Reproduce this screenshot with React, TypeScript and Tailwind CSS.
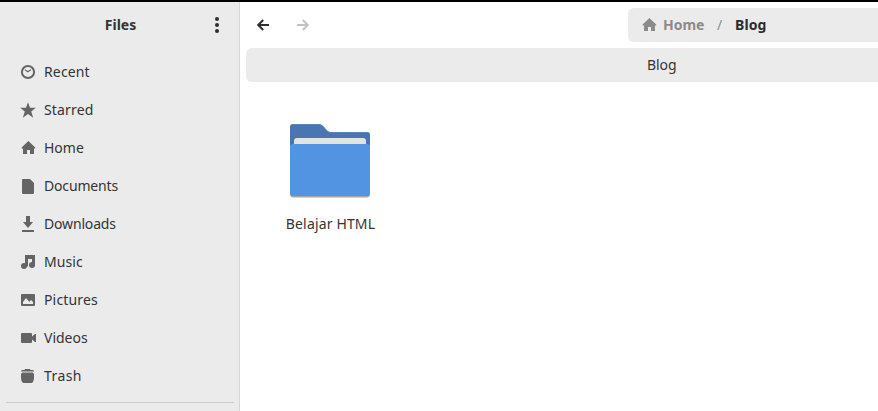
import type { ReactNode } from "react";

const HomeShape = () => <path d="M8.4 1 1.6 7.4V8.4H3V14h4v-3.9h3V14h4V8.4h1.2v-1z" />;

type Place = { label: string; spacing: string; icon: ReactNode };

const places: Place[] = [
  {
    label: "Recent",
    spacing: "tracking-[0.15px]",
    icon: (
      <>
        <circle cx="8" cy="8" r="6.1" fill="none" stroke="currentColor" strokeWidth="2" />
        <path d="M5 5.8 7.8 7.8 11 5.8" fill="none" stroke="currentColor" strokeWidth="1.1" />
      </>
    ),
  },
  {
    label: "Starred",
    spacing: "tracking-[0.15px]",
    icon: <path d="m8 .3 2 5.5h5.8l-4.6 3.6 2 6.4L8 12l-5.2 3.8 2-6.4L.2 5.8H6z" />,
  },
  { label: "Home", spacing: "tracking-[0px]", icon: <HomeShape /> },
  {
    label: "Documents",
    spacing: "tracking-[-0.17px]",
    icon: <path d="M3 1h7l4 4v10a1 1 0 0 1-1 1H3a1 1 0 0 1-1-1V2a1 1 0 0 1 1-1z" />,
  },
  {
    label: "Downloads",
    spacing: "tracking-[-0.17px]",
    icon: <path d="M6 0h4v6h3L8 12 3 6h3zM2 14h12v2H2z" />,
  },
  {
    label: "Music",
    spacing: "tracking-[0.1px]",
    icon: (
      <>
        <path d="M5 1h10v10.5h-3V5H8v7.5H5z" />
        <circle cx="4" cy="12" r="3" />
        <circle cx="12" cy="11" r="3" />
      </>
    ),
  },
  {
    label: "Pictures",
    spacing: "tracking-[0.15px]",
    icon: (
      <path
        fillRule="evenodd"
        d="M2 2h12a1 1 0 0 1 1 1v10a1 1 0 0 1-1 1H2a1 1 0 0 1-1-1V3a1 1 0 0 1 1-1zM3 12h10V10L11.2 8 9.2 9.7 6 6 3 10z"
      />
    ),
  },
  {
    label: "Videos",
    spacing: "tracking-[0px]",
    icon: <path d="M2 3h9a1 1 0 0 1 1 1v2.5L15 4h1v8h-1l-3-2.5V12a1 1 0 0 1-1 1H2a1 1 0 0 1-1-1V4a1 1 0 0 1 1-1z" />,
  },
  {
    label: "Trash",
    spacing: "tracking-[0.4px]",
    icon: <path d="M5 1h5l.5 1H13l1 1v.5H1V3l1-1h2.5zM2.5 4.5h10Q14 5 14 6.5V10q-.3 5-3 5H4q-2.700 0-3-5V6.500Q1 5 2.500 4.500z" />,
  },
];

function Sidebar() {
  return (
    <aside className="flex w-60 shrink-0 flex-col border-r border-[#d6d6d6] bg-[#ebebeb]">
      <header className="grid h-[46px] grid-cols-[1fr_auto_1fr] items-center pr-[14px] pl-4">
        <h1 className="col-start-2 text-[14px] font-bold">Files</h1>
        <button aria-label="Menu" className="justify-self-end">
          <svg className="size-4" viewBox="0 0 16 16" fill="#2f2f2f">
            <circle cx="8" cy="2" r="2" />
            <circle cx="8" cy="8" r="2" />
            <circle cx="8" cy="14" r="2" />
          </svg>
        </button>
      </header>
      <nav className="mt-[5px]">
        {places.map((p) => (
          <a key={p.label} className="flex h-[38px] items-center gap-2 pl-5">
            <svg className="size-4 text-[#646464]" viewBox="0 0 16 16" fill="currentColor">
              {p.icon}
            </svg>
            <span className={p.spacing}>{p.label}</span>
          </a>
        ))}
      </nav>
      <hr className="mt-[7px] mr-[5px] ml-[6px] border-[#cdcdcd]" />
    </aside>
  );
}

function Folder() {
  return (
    <svg className="h-20 w-20" viewBox="0 0 80 80">
      <path d="M0 10h80v61a3.5 3.5 0 0 1-3.5 3.5h-73A3.5 3.5 0 0 1 0 71z" fill="#a5a5a5" />
      <path d="M3 1h25c3 0 4 1 6 3l2 2.500c2 2 3 2.500 5 2.500h36a3 3 0 0 1 3 3v30H0V4a3 3 0 0 1 3-3z" fill="#4975b2" />
      <path d="M3 1.500h25c3 0 4 1 6 3l2 2.500c2 2 3 2.500 5 2.500h36" fill="none" stroke="#5b83ba" />
      <path d="M7 15h66a3 3 0 0 1 3 3v10H4V18a3 3 0 0 1 3-3z" fill="#e3e3e3" />
      <path d="M3 21h74a3 3 0 0 1 3 3v46a3 3 0 0 1-3 3H3a3 3 0 0 1-3-3V24a3 3 0 0 1 3-3z" fill="#5294e2" />
    </svg>
  );
}

export default function App() {
  return (
    <div className="flex h-[411px] w-[878px] overflow-hidden border-t-2 border-black bg-white font-['Noto_Sans','Open_Sans',sans-serif] text-[14px] leading-5 text-[#343434]">
      <Sidebar />
      <main className="min-w-0 flex-1 pt-[6px] pl-[6px]">
        <div className="flex h-[34px] items-center justify-between">
          <div className="flex gap-6 pl-[9px]">
            <svg className="size-4 text-[#2f2f2f]" viewBox="0 0 16 16" fill="none" stroke="currentColor" strokeWidth="2">
              <path d="M14 8H3.500M8.200 3 3.200 8l5 5" />
            </svg>
            <svg className="size-4 text-[#c2c2c2]" viewBox="0 0 16 16" fill="none" stroke="currentColor" strokeWidth="2">
              <path d="M2 8h10.500M7.800 3l5 5-5 5" />
            </svg>
          </div>
          <div className="flex h-full w-[250px] items-center rounded-l-md bg-[#ebebeb] pl-[13px] font-bold text-[#8b8b8b]">
            <svg className="size-4" viewBox="0 0 16 16" fill="currentColor">
              <HomeShape />
            </svg>
            <span className="ml-[6px] w-[42px]">Home</span>
            <span className="ml-3 w-[18px] font-normal">/</span>
            <span className="tracking-[0.1px] text-[#2c2c2c]">Blog</span>
          </div>
        </div>
        <div className="mt-[6px] flex h-[34px] items-center rounded-l-md bg-[#ebebeb] pl-[401px] tracking-[-0.1px]">
          Blog
        </div>
        <div className="mt-[41px] ml-[34px] flex w-[100px] flex-col items-center">
          <Folder />
          <span className="mt-[11px] pl-px whitespace-nowrap tracking-[0.15px]">Belajar HTML</span>
        </div>
      </main>
    </div>
  );
}
